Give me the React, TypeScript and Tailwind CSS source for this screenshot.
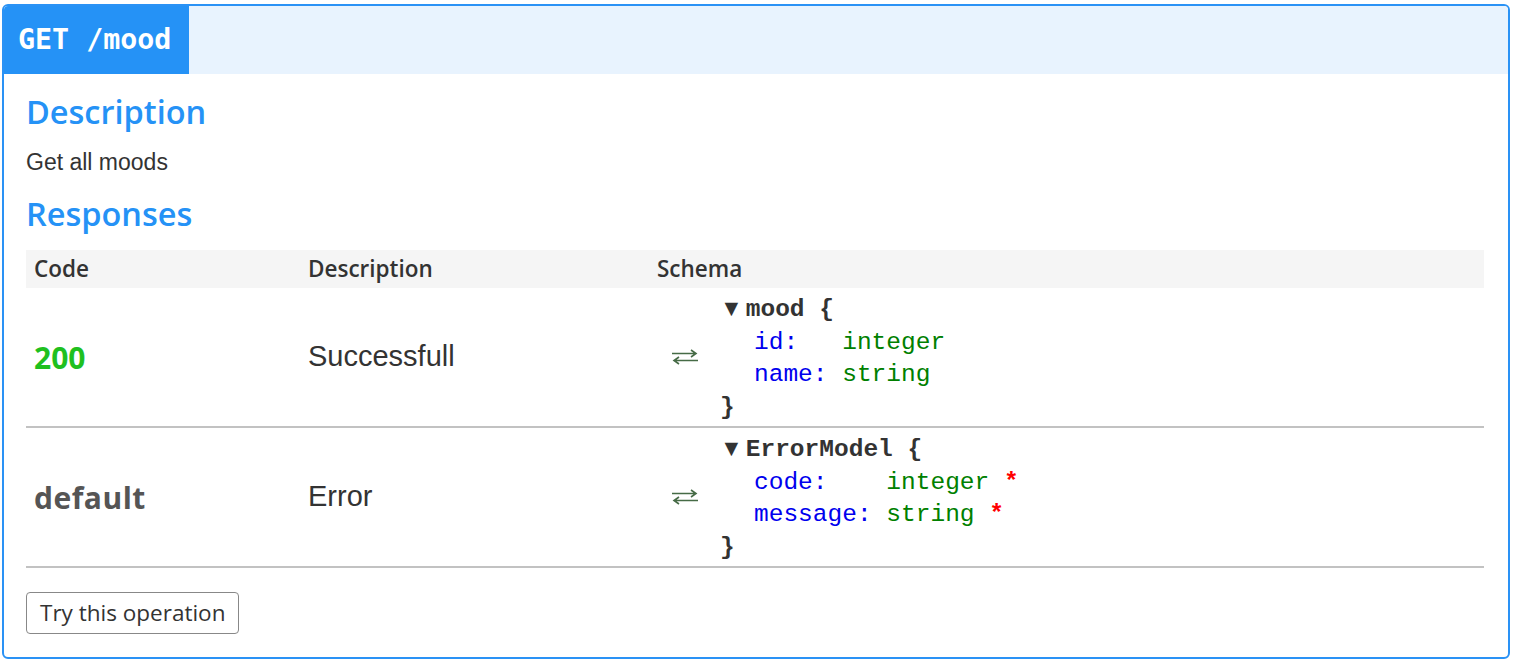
import React from "react";

const sans = { fontFamily: '"Open Sans", sans-serif' };
const helv = { fontFamily: '"Liberation Sans", Arial, sans-serif' };
const mono = { fontFamily: '"Liberation Mono", "Courier New", monospace' };

interface Prop {
  name: string;
  type: string;
  required?: boolean;
}

interface Resp {
  code: string;
  codeClass: string;
  description: string;
  model: string;
  props: Prop[];
}

const responses: Resp[] = [
  {
    code: "200",
    codeClass: "text-[#1fc01f]",
    description: "Successfull",
    model: "mood",
    props: [
      { name: "id", type: "integer" },
      { name: "name", type: "string" },
    ],
  },
  {
    code: "default",
    codeClass: "text-[#555555] tracking-[0.5px]",
    description: "Error",
    model: "ErrorModel",
    props: [
      { name: "code", type: "integer", required: true },
      { name: "message", type: "string", required: true },
    ],
  },
];

function SwapArrows() {
  return (
    <svg width="28" height="16" viewBox="0 0 28 16" fill="none" stroke="#466b46" strokeWidth="1.6">
      <path d="M1 4.5h24M20 1l5 3.5-5 3.5" />
      <path d="M27 11.5H3M8 8l-5 3.5 5 3.5" />
    </svg>
  );
}

function Model({ name, props }: { name: string; props: Prop[] }) {
  const pad = Math.max(...props.map((p) => p.name.length)) + 1;
  return (
    <div className="pt-[2px] text-[24.5px] leading-[32.5px] whitespace-pre" style={mono}>
      <div className="font-bold text-[#333]">
        <span className="mr-[3px] text-[23px]" style={helv}>▼</span>
        {name} {"{"}
      </div>
      {props.map((p) => (
        <div key={p.name} className="pl-[34px]">
          <span className="text-[#0000ee]">{(p.name + ":").padEnd(pad, " ")}</span>
          <span className="text-[#008000]"> {p.type}</span>
          {p.required && <span className="font-bold text-[#ff0000]"> *</span>}
        </div>
      ))}
      <div className="font-bold text-[#333]">{"}"}</div>
    </div>
  );
}

export default function App() {
  return (
    <div className="min-h-screen bg-white pt-[4px] pl-[2px]">
      <div className="w-[1508px] overflow-hidden rounded-[6px] border-2 border-[#2a92f5] bg-white">
        <div className="flex h-[68px] bg-[#e8f3fe]">
          <div
            className="flex items-center bg-[#2592f6] pl-[14px] pr-[18px] pt-[1px] text-[28.3px] font-bold text-white whitespace-pre"
            style={{ fontFamily: '"DejaVu Sans Mono", monospace' }}
          >
            GET /mood
          </div>
        </div>

        <div className="pl-[22px] pr-[24px] pb-[23px]">
          <h2 className="mt-[18px] text-[32.5px] leading-[40px] font-semibold text-[#2592f6]" style={sans}>
            Description
          </h2>
          <p className="mt-[15px] text-[23px] leading-[30px] text-[#333]" style={helv}>
            Get all moods
          </p>
          <h2 className="mt-[17px] text-[32.5px] leading-[40px] font-semibold text-[#2592f6]" style={sans}>
            Responses
          </h2>

          <div className="mt-[16px]">
            <div className="grid h-[38px] grid-cols-[274px_349px_1fr] items-center bg-[#f5f5f5] text-[22.5px] font-semibold text-[#333]" style={sans}>
              <div className="px-[8px]">Code</div>
              <div className="px-[8px]">Description</div>
              <div className="px-[8px]">Schema</div>
            </div>
            {responses.map((r) => (
              <div
                key={r.code}
                className="grid h-[140px] grid-cols-[274px_349px_1fr] items-center border-b-2 border-[#c2c2c2]"
              >
                <div className={`px-[8px] text-[30px] font-bold ${r.codeClass}`} style={sans}>
                  {r.code}
                </div>
                <div className="px-[8px] text-[29px] text-[#333]" style={helv}>
                  {r.description}
                </div>
                <div className="flex items-center pl-[22px]">
                  <SwapArrows />
                  <div className="ml-[21px]">
                    <Model name={r.model} props={r.props} />
                  </div>
                </div>
              </div>
            ))}
          </div>

          <button
            type="button"
            className="mt-[24px] h-[42px] rounded-[4px] border border-[#888] bg-white px-[13px] text-[22.5px] text-[#333]"
            style={sans}
          >
            Try this operation
          </button>
        </div>
      </div>
    </div>
  );
}
